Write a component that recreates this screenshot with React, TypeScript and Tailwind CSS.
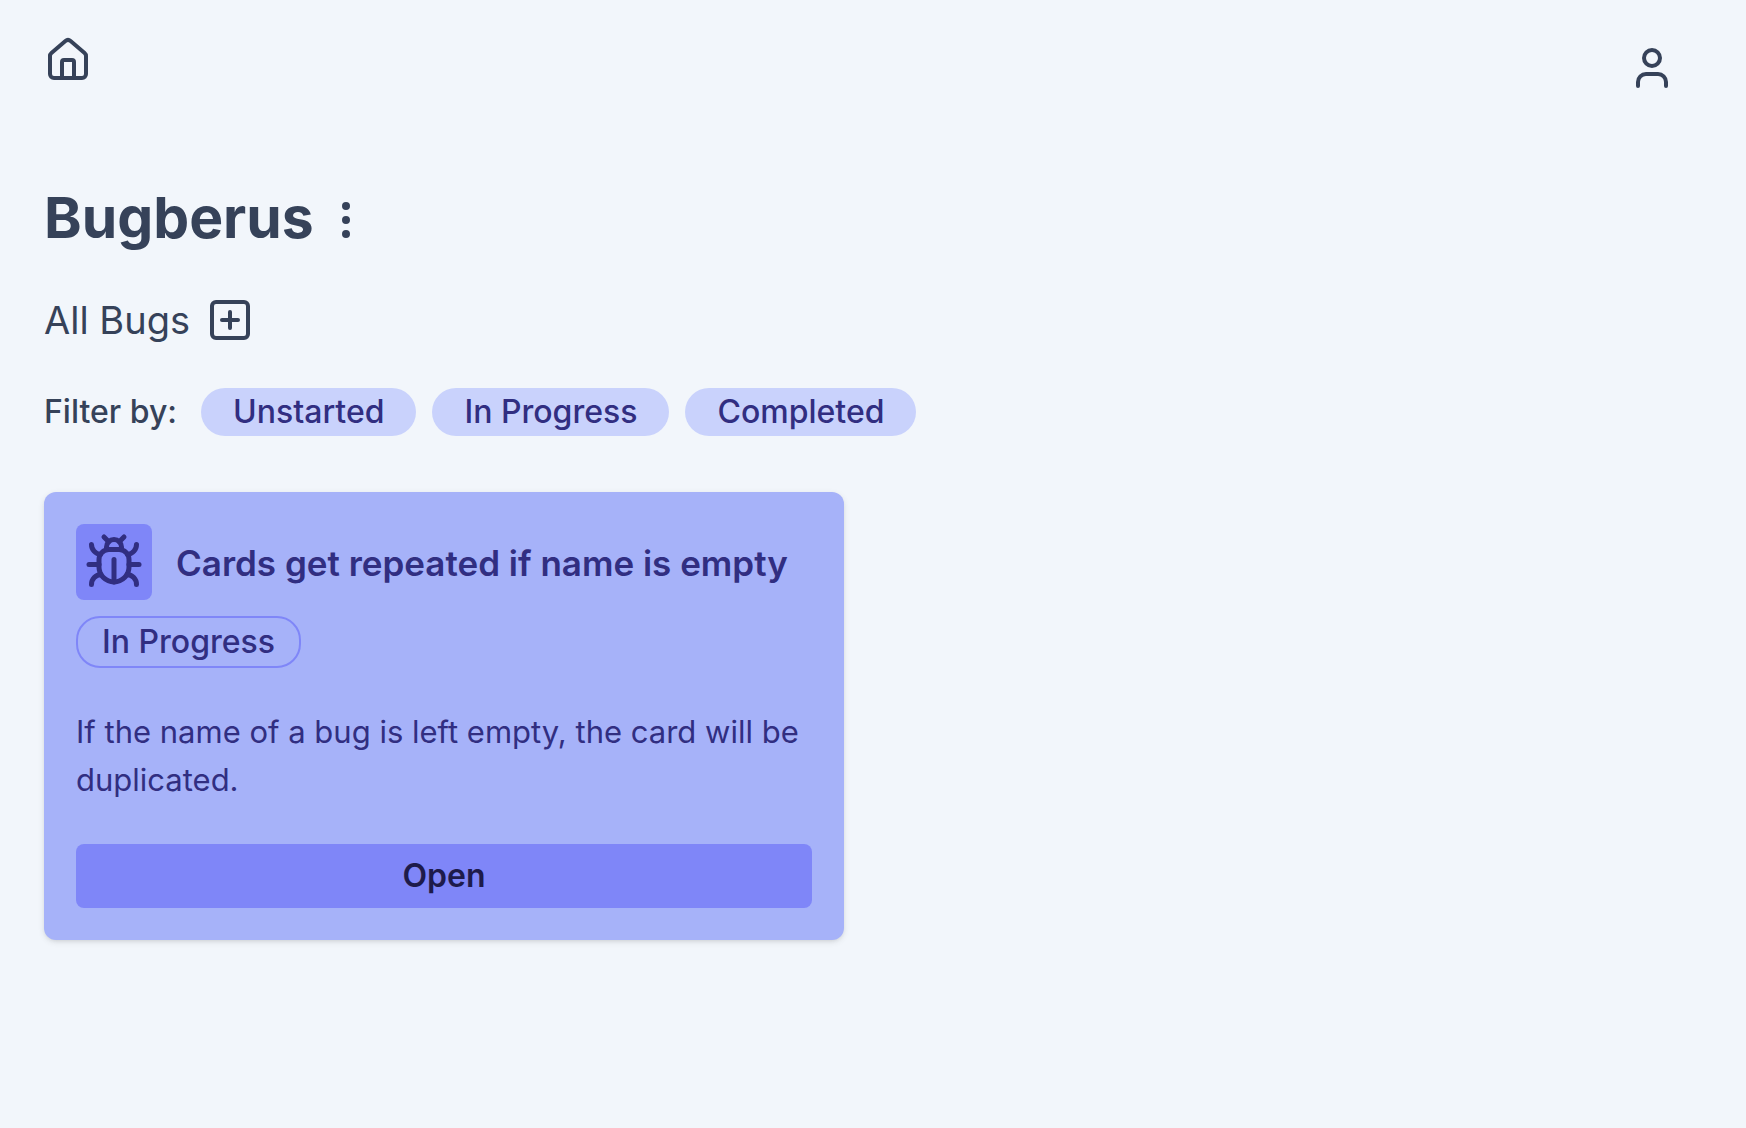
import { Bug, EllipsisVertical, House, SquarePlus, User } from "lucide-react";

const filters = ["Unstarted", "In Progress", "Completed"];

type BugReport = { title: string; status: string; description: string };

const bugs: BugReport[] = [
  {
    title: "Cards get repeated if name is empty",
    status: "In Progress",
    description: "If the name of a bug is left empty, the card will be duplicated.",
  },
];

function BugCard({ title, status, description }: BugReport) {
  return (
    <article className="w-full max-w-[800px] rounded-xl bg-[#a6b2f9] p-8 text-[#312e81] shadow-[0_2px_6px_rgba(0,0,0,0.1),0_2px_4px_-2px_rgba(0,0,0,0.1)]">
      <header className="flex items-center gap-6">
        <div className="shrink-0 rounded-lg bg-[#7f86f8] p-2">
          <Bug size={60} />
        </div>
        <h3 className="pt-0.5 text-[35px] leading-[56px] font-semibold">{title}</h3>
      </header>
      <p className="mt-4 w-fit rounded-3xl border-2 border-[#7f86f8] px-6 text-[32px] leading-[48px] font-medium">{status}</p>
      <p className="mt-10 text-[31px] leading-[48px]">{description}</p>
      <button type="button" className="mt-10 w-full rounded-lg bg-[#7f86f8] py-2 text-[32px] leading-[48px] font-semibold text-[#1e1b4b]">
        Open
      </button>
    </article>
  );
}

export default function App() {
  return (
    <div className="min-h-screen bg-[#f2f6fb] font-['Inter',sans-serif] text-[#364259]">
      <nav className="flex items-start justify-between pt-9 pr-[70px] pl-11">
        <a href="#home" aria-label="Home">
          <House size={48} />
        </a>
        <button type="button" aria-label="Account" className="pt-2">
          <User size={48} />
        </button>
      </nav>
      <main className="px-11 pt-24">
        <div className="flex items-start gap-2">
          <h1 className="text-[57px] leading-[60px] font-bold">Bugberus</h1>
          <button type="button" aria-label="Project options" className="py-2">
            <EllipsisVertical size={48} />
          </button>
        </div>
        <div className="mt-10 flex items-center gap-4">
          <h2 className="text-[38px] leading-[56px]">All Bugs</h2>
          <button type="button" aria-label="Add bug">
            <SquarePlus size={48} />
          </button>
        </div>
        <div className="mt-10 flex items-center gap-4 text-[32px] leading-[48px] font-medium">
          <span className="mr-2">Filter by:</span>
          {filters.map((name) => (
            <button key={name} type="button" className="rounded-3xl bg-[#c9d2fc] px-8 text-[#312e81]">
              {name}
            </button>
          ))}
        </div>
        <section className="mt-14">
          {bugs.map((bug) => (
            <BugCard key={bug.title} {...bug} />
          ))}
        </section>
      </main>
    </div>
  );
}
